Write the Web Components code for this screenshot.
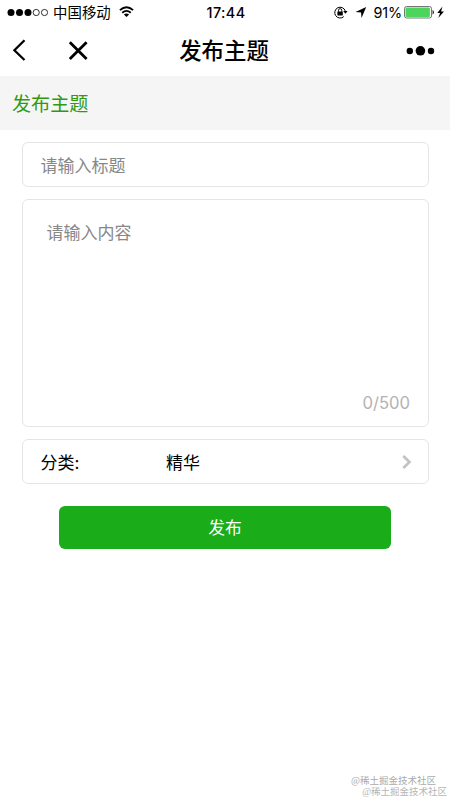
<!DOCTYPE html>
<html lang="zh-CN">
<head>
<meta charset="utf-8">
<title>发布主题</title>
<style>
html,body{margin:0;background:#fff}
body{font-family:Inter,"Noto Sans CJK SC",sans-serif;color:#000;width:450px;height:800px;overflow:hidden}
</style>
</head>
<body>
<publish-page></publish-page>
<script>
const define = (name, html) => {
  const t = document.createElement('template');
  t.innerHTML = html;
  customElements.define(name, class extends HTMLElement {
    constructor() {
      super();
      this.attachShadow({ mode: 'open' }).append(t.content.cloneNode(true));
    }
  });
};

define('status-bar', `
<style>
:host{display:grid;grid-template-columns:1fr auto 1fr;align-items:center;height:25px;font-size:14.4px;line-height:25px}
.left,.right{display:flex;align-items:center;height:25px}
.right{justify-content:flex-end}
svg{display:block;flex:none}
.carrier{margin-left:5px;letter-spacing:.05px;white-space:nowrap}
.time{font-weight:500;letter-spacing:.4px;padding-left:2px}
.left svg:first-child{margin-left:7px}
.wifi{margin-left:8px}
.pct{margin-left:5.5px;letter-spacing:-.2px;width:28.5px;white-space:nowrap}
</style>
<div class="left">
<svg width="41" height="25" viewBox="0 0 41 25"><g><circle cx="4" cy="12.5" r="3.5"/><circle cx="12.5" cy="12.5" r="3.5"/><circle cx="21" cy="12.5" r="3.5"/></g><g fill="none" stroke="#000" stroke-width=".8"><circle cx="29.2" cy="12.5" r="3.1"/><circle cx="37.5" cy="12.5" r="3.1"/></g></svg>
<span class="carrier">中国移动</span>
<svg class="wifi" width="16" height="25" viewBox="0 0 16 25"><g fill="none" stroke="#000" stroke-width="1.8"><path d="M.9 10.2Q7.5 4.2 14.1 10.2M3.2 12.7Q7.5 9 11.8 12.7"/></g><path d="M4.9 14.4Q7.5 12.5 10.1 14.4L7.5 17z"/></svg>
</div>
<span class="time">17:44</span>
<div class="right">
<svg width="34" height="25" viewBox="334 0 34 25"><path d="M343.8 16.6A5.4 5.4 0 1 1 345.3 11" fill="none" stroke="#000" stroke-width="1"/><path d="M343.2 10.9h4.4l-2.2 2.9z"/><rect x="337.4" y="11.4" width="5.4" height="4.1" rx=".4"/><path d="M338.5 11.8v-1.6a1.6 1.6 0 0 1 3.2 0v1.6" fill="none" stroke="#000" stroke-width=".9"/><path d="M366.2 7l-4.7 10.9-.4-5.4-5.6-.4z"/></svg>
<span class="pct">91%</span>
<svg width="48" height="25" viewBox="402 0 48 25"><rect x="404.5" y="6.5" width="27" height="11.5" rx="2" fill="#fff" stroke="#666" stroke-width=".9"/><rect x="405.5" y="7.5" width="24.4" height="9.5" rx="1" fill="#4cd55d"/><path d="M432.6 9.8q2.6 2.5 0 5z"/><path d="M442.4 6.6l-5.1 6.5h2.8l-1.8 4.9 5.7-6.6h-2.9z"/></svg>
</div>`);

define('nav-bar', `
<style>
:host{display:grid;grid-template-columns:1fr auto 1fr;align-items:center;height:51px;font-size:22.4px;font-weight:500;line-height:51px}
svg{display:block}
svg:last-child{justify-self:end}
span{position:relative;left:-1px}
</style>
<svg width="100" height="51" viewBox="0 25 100 51" fill="none" stroke="#000"><path d="M24.5 40.3L14.4 50.3l10.1 9.7" stroke-width="2.3"/><path d="M69.8 42.2l16.8 16.7M86.6 42.2L69.8 58.9" stroke-width="2.8"/></svg>
<span><slot></slot></span>
<svg width="50" height="51" viewBox="400 25 50 51"><circle cx="409.8" cy="51" r="3.2"/><circle cx="420.4" cy="50.8" r="4.8"/><circle cx="431" cy="51" r="3.2"/></svg>`);

define('section-title', `
<style>:host{display:block;box-sizing:border-box;height:54px;padding-left:12px;background:#f5f5f5;color:#2f9a10;font-size:19.1px;line-height:57px}</style><slot></slot>`);

define('field-box', `
<style>
:host{display:flex;box-sizing:border-box;border:1px solid #e5e5e5;border-radius:6px;height:45px;padding:2px 18px 0 17.5px;align-items:center;font-size:17px;line-height:24px;color:#000}
:host([placeholder]){color:#888}
:host([tall]){height:228px;padding:21px 18px 11px 23.5px;flex-direction:column;align-items:flex-start;justify-content:space-between}
::slotted([slot=count]){align-self:flex-end;color:#b2b2b2;font-size:16.6px}
::slotted([slot=label]){width:125.5px}
::slotted(chevron-icon){margin-left:auto}
</style>
<slot name="label"></slot><slot></slot><slot name="count"></slot>`);

define('chevron-icon', `
<style>:host{display:block;margin-right:-3px;margin-top:-1px}svg{display:block}</style>
<svg width="12" height="16" viewBox="0 0 12 16"><path d="M2.3 2l6.2 6-6.2 6" fill="none" stroke="#c2c2c2" stroke-width="2.6"/></svg>`);

define('primary-button', `
<style>:host{display:block;height:43px;border-radius:6px;background:#1bac19;color:#fff;font-size:16.8px;line-height:44px;text-align:center}</style><slot></slot>`);

define('water-mark', `
<style>
:host{position:absolute;right:3px;bottom:2px;display:flex;flex-direction:column;align-items:flex-end;font:9.5px/11px "Noto Sans CJK SC",sans-serif;color:#aaa;white-space:nowrap}
.a{margin-right:11px;margin-bottom:1px}
.b{font-family:"Liberation Serif","Noto Sans CJK SC",serif;color:#b5b5b5}
</style><span class="a">@稀土掘金技术社区</span><span class="b">@稀土掘金技术社区</span>`);

define('publish-page', `
<style>
:host{display:block;position:relative;width:450px;height:800px;background:#fff}
form{display:flex;flex-direction:column;gap:12px;margin:12px 21px 0 22px}
primary-button{margin:10px 38px 0 37px}
</style>
<status-bar></status-bar>
<nav-bar>发布主题</nav-bar>
<section-title>发布主题</section-title>
<form>
<field-box placeholder>请输入标题</field-box>
<field-box placeholder tall><span>请输入内容</span><span slot="count">0/500</span></field-box>
<field-box><span slot="label">分类:</span><span>精华</span><chevron-icon></chevron-icon></field-box>
<primary-button>发布</primary-button>
</form>
<water-mark></water-mark>`);
</script>
</body>
</html>
